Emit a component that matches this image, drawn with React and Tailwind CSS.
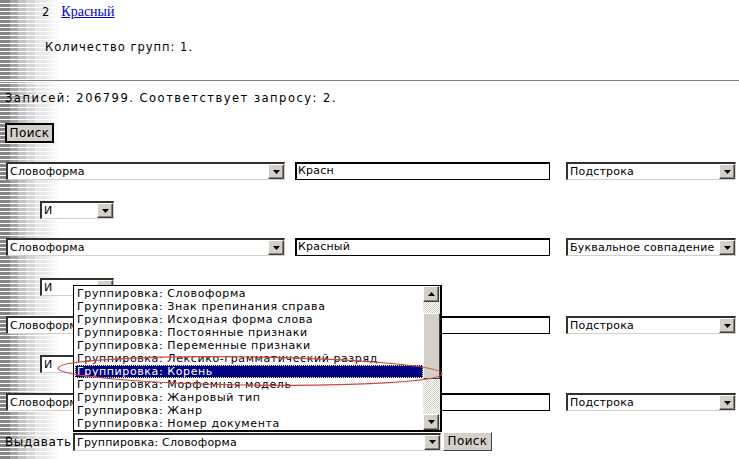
import React from 'react'

const font = "font-['DejaVu_Sans',sans-serif]"

const Arrow = ({ up }) => (
  <span className="flex h-full w-[16px] shrink-0 items-center justify-center bg-[#d4d0c8] border border-t-white border-l-white border-r-[#404040] border-b-[#404040] shadow-[inset_-1px_-1px_0_#808080]">
    <svg width="7" height="4" viewBox="0 0 7 4">
      <path d={up ? 'M3.5 0L7 4H0z' : 'M0 0h7L3.5 4z'} fill="#000" />
    </svg>
  </span>
)

const Select = ({ value, className = '' }) => (
  <div className={`flex h-[18px] items-stretch bg-white border-t-2 border-l-2 border-t-[#303030] border-l-[#303030] border-b border-r border-b-[#d4d0c8] border-r-[#d4d0c8] text-[11px] tracking-[0.2px] ${className}`}>
    <span className="flex-1 overflow-hidden whitespace-nowrap pl-[2px] leading-[15px]">{value}</span>
    <Arrow />
  </div>
)

const Input = ({ value }) => (
  <div className="h-[18px] w-[255px] bg-white border border-black border-t-2 border-l-2 pl-[1px] text-[11px] tracking-[0.2px] leading-[14px]">{value}</div>
)

const Row = ({ field = 'Словоформа', text = '', mode = 'Подстрока' }) => (
  <div className="flex items-center">
    <Select value={field} className="ml-[6px] w-[279px]" />
    <div className="ml-[10px]">
      <Input value={text} />
    </div>
    <Select value={mode} className="ml-[16px] w-[170px]" />
  </div>
)

const AndSelect = () => <Select value="И" className="ml-[40px] w-[74px]" />

const groups = [
  'Словоформа',
  'Знак препинания справа',
  'Исходная форма слова',
  'Постоянные признаки',
  'Переменные признаки',
  'Лексико-грамматический разряд',
  'Корень',
  'Морфемная модель',
  'Жанровый тип',
  'Жанр',
  'Номер документа',
]

const Dropdown = () => (
  <div className="absolute left-[73px] top-[285px] flex h-[147px] w-[369px] border border-black border-r-2 border-b-2 bg-white text-[11px] tracking-[0.6px]">
    <ul className="flex-1 pt-[1px] pl-[1px]">
      {groups.map((g) => (
        <li
          key={g}
          className={`h-[13px] pl-[2px] leading-[13px] whitespace-nowrap ${g === 'Корень' ? 'bg-[#000080] text-white outline outline-1 outline-dotted outline-[#ffff80] -outline-offset-1' : ''}`}
        >
          Группировка: {g}
        </li>
      ))}
    </ul>
    <div className="flex w-[17px] flex-col bg-[repeating-conic-gradient(#d4d0c8_0_25%,#fff_0_50%)] bg-[length:2px_2px]">
      <div className="h-[16px]">
        <Arrow up />
      </div>
      <div className="mt-[11px] h-[66px] bg-[#d4d0c8] border border-t-white border-l-white border-r-[#404040] border-b-[#404040]" />
      <div className="flex-1" />
      <div className="h-[16px]">
        <Arrow />
      </div>
    </div>
  </div>
)

export default function App() {
  return (
    <div className={`relative h-[459px] w-[739px] overflow-hidden bg-white text-[11.5px] tracking-[1px] text-black ${font}`}>
      <div className="absolute inset-0 bg-[image:repeating-linear-gradient(to_bottom,transparent_0_3px,#fff_3px_4px),linear-gradient(to_right,#858585_0_10px,#a6a6a6_10px_18px,#c2c2c2_18px_26px,#d6d6d6_26px_35px,#e8e8e8_35px_44px,#fff_60px)]" />
      <div className="relative">
        <div className="flex items-baseline pt-[4px] pl-[42px] leading-[16px]">
          <span>2</span>
          <a href="#" className="ml-[11px] font-['Liberation_Serif',serif] text-[14px] tracking-normal text-[#0000cc] underline">Красный</a>
        </div>
        <p className="mt-[19px] pl-[45px] leading-[16px]">Количество групп: 1.</p>
        <div className="mt-[25px] h-[2px] border-t border-t-[#808080] border-b border-b-white" />
        <p className="mt-[8px] pl-[5px] leading-[16px] tracking-[1.5px]">Записей: 206799. Соответствует запросу: 2.</p>
        <button className="mt-[17px] ml-[5px] h-[20px] w-[49px] border-2 border-black bg-[#d4d0c8] text-[12px] leading-[14px] tracking-[0.4px]">Поиск</button>
        <div className="mt-[19px]"><Row text="Красн" /></div>
        <div className="mt-[21px]"><AndSelect /></div>
        <div className="mt-[19px]"><Row text="Красный" mode="Буквальное совпадение" /></div>
        <div className="mt-[22px]"><AndSelect /></div>
        <div className="mt-[20px]"><Row /></div>
        <div className="mt-[21px]"><AndSelect /></div>
        <div className="mt-[20px]"><Row /></div>
        <div className="mt-[21px] flex items-center">
          <span className="ml-[5px] w-[68px] text-[12px] tracking-[0.6px]">Выдавать</span>
          <Select value="Группировка: Словоформа" className="w-[368px]" />
          <button className="ml-[2px] h-[19px] w-[49px] border border-t-white border-l-white border-r-[#404040] border-b-[#404040] bg-[#d4d0c8] text-[12px] leading-[15px] tracking-[0.4px]">Поиск</button>
        </div>
      </div>
      <Dropdown />
      <svg className="absolute left-[54px] top-[353px]" width="392" height="38" viewBox="0 0 392 38">
        <ellipse cx="196" cy="18" rx="192" ry="14" fill="none" stroke="#d04444" strokeWidth="1.2" transform="rotate(0.8 196 18)" />
      </svg>
    </div>
  )
}
